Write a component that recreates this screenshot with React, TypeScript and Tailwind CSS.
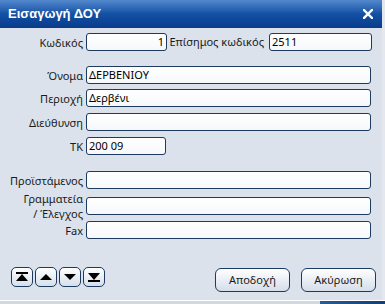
import React from 'react';

const font = { fontFamily: '"Noto Sans", "DejaVu Sans", sans-serif' };
const titleFont = { fontFamily: '"Liberation Sans", Arial, sans-serif' };

const Field: React.FC<{ w: string; value?: string; right?: boolean }> = ({ w, value = '', right }) => (
  <div
    className={`${w} h-[18px] shrink-0 rounded-[3px] border border-[#1d3a5f] bg-gradient-to-b from-[#ffffff] to-[#f6f8fb] px-[2px] text-[11px] leading-[15px] text-black whitespace-nowrap overflow-hidden ${right ? 'text-right' : ''}`}
  >
    {value}
  </div>
);

const Row: React.FC<{ label: React.ReactNode; className?: string; tall?: boolean; children: React.ReactNode }> = ({
  label,
  className = '',
  tall,
  children,
}) => (
  <div className={`flex items-center ${className}`}>
    <div className={`w-[86px] shrink-0 pr-[3px] text-right text-[11px] text-[#1a1a1a] ${tall ? 'leading-[15px]' : 'leading-[13px]'}`}>
      {label}
    </div>
    {children}
  </div>
);

const NavBtn: React.FC<{ kind: 'first' | 'up' | 'down' | 'last' }> = ({ kind }) => (
  <div className="flex h-[20px] w-[22px] items-center justify-center rounded-[5px] border border-[#1d3a5f] bg-gradient-to-b from-[#ffffff] to-[#d6dfea]">
    <svg width="14" height="12" viewBox="0 0 14 12">
      {kind === 'first' && (
        <>
          <rect x="1" y="1" width="12" height="2" fill="#000" />
          <polygon points="7,3 1,10 13,10" fill="#000" />
        </>
      )}
      {kind === 'up' && <polygon points="7,3 1,9 13,9" fill="#000" />}
      {kind === 'down' && <polygon points="1,3 13,3 7,9" fill="#000" />}
      {kind === 'last' && (
        <>
          <polygon points="1,2 13,2 7,9" fill="#000" />
          <rect x="1" y="9" width="12" height="2" fill="#000" />
        </>
      )}
    </svg>
  </div>
);

const Btn: React.FC<{ children: React.ReactNode }> = ({ children }) => (
  <div className="flex h-[24px] w-[75px] items-center justify-center rounded-[6px] border border-[#1d3a5f] bg-gradient-to-b from-[#ffffff] to-[#d5deea] text-[11px] text-[#1a1a1a]">
    {children}
  </div>
);

export default function App() {
  return (
    <div className="flex h-[304px] w-[385px] flex-col overflow-hidden bg-[#d6dce4]" style={font}>
      <div className="flex flex-1 flex-row">
        <div className="flex w-[382px] flex-col">
          {/* Title bar */}
          <div className="flex h-[28px] items-center justify-between bg-gradient-to-b from-[#5289cc] via-[#1350a4] to-[#093b8a] pl-[8px] pr-[9px]">
            <span className="text-[13px] font-bold text-white" style={titleFont}>Εισαγωγή ΔΟΥ</span>
            <svg width="10" height="10" viewBox="0 0 10 10">
              <path d="M1 1 L9 9 M9 1 L1 9" stroke="#fff" strokeWidth="2.4" strokeLinecap="square" />
            </svg>
          </div>

          {/* Body */}
          <div className="flex flex-1 flex-col bg-[#dbe2ec] pt-[5px]">
            <Row label="Κωδικός">
              <Field w="w-[81px]" value="1" right />
              <div className="w-[102px] shrink-0 pr-[5px] text-right text-[11px] text-[#1a1a1a]">Επίσημος κωδικός</div>
              <Field w="w-[103px]" value="2511" />
            </Row>
            <Row label="Όνομα" className="mt-[15px]">
              <Field w="w-[285px]" value="ΔΕΡΒΕΝΙΟΥ" />
            </Row>
            <Row label="Περιοχή" className="mt-[5px]">
              <Field w="w-[285px]" value="Δερβένι" />
            </Row>
            <Row label="Διεύθυνση" className="mt-[6px]">
              <Field w="w-[285px]" />
            </Row>
            <Row label="ΤΚ" className="mt-[6px]">
              <Field w="w-[80px]" value="200 09" />
            </Row>
            <Row label="Προϊστάμενος" className="mt-[16px]">
              <Field w="w-[285px]" />
            </Row>
            <Row
              tall
              label={
                <>
                  Γραμματεία
                  <br />/ Έλεγχος
                </>
              }
              className="mt-[2px]"
            >
              <Field w="w-[285px]" />
            </Row>
            <Row label="Fax" className="mt-[0px]">
              <Field w="w-[285px]" />
            </Row>

            <div className="mt-auto mb-[8px] flex items-end justify-between pl-[11px] pr-[6px]">
              <div className="mb-[5px] flex gap-[2px]">
                <NavBtn kind="first" />
                <NavBtn kind="up" />
                <NavBtn kind="down" />
                <NavBtn kind="last" />
              </div>
              <div className="flex gap-[11px]">
                <Btn>Αποδοχή</Btn>
                <Btn>Ακύρωση</Btn>
              </div>
            </div>
          </div>
        </div>
        <div className="w-[3px] bg-[#e4e8ee]" />
      </div>
      <div className="h-[1px] bg-white" />
      <div className="flex h-[3px]">
        <div className="flex-1 bg-[#d2d8e0]" />
        <div className="w-[65px] bg-gradient-to-r from-[#2a5a98] to-[#123f7a]" />
      </div>
    </div>
  );
}
